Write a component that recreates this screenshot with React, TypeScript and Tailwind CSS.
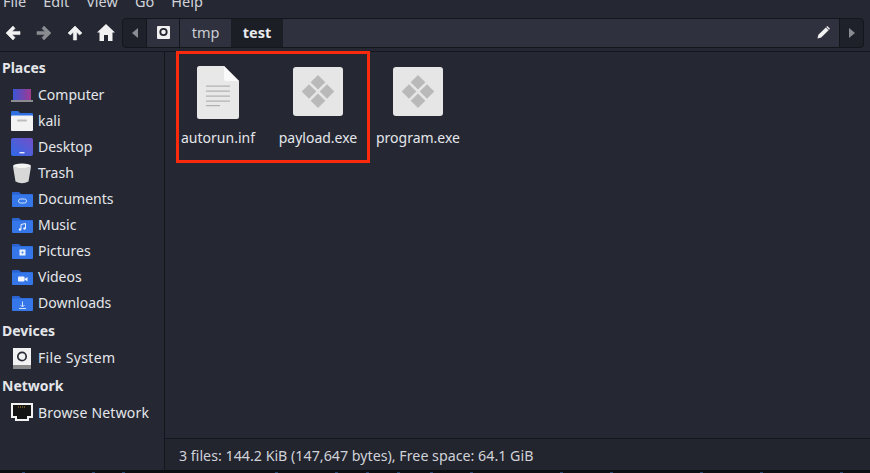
import React from "react";

const Folder = ({ children }: { children?: React.ReactNode }) => (
  <svg width="21" height="15" viewBox="0 0 21 15">
    <path d="M0 1a1 1 0 0 1 1-1h6l2 2h11a1 1 0 0 1 1 1v3H0z" fill="#2a63cf" />
    <rect x="0" y="2.500" width="21" height="12.500" rx="1" fill="#3577e8" />
    {children}
  </svg>
);

const Arrow = ({ rot = 0, color = "#f2f2f2" }: { rot?: number; color?: string }) => (
  <svg width="16" height="16" viewBox="0 0 16 16" style={{ transform: `rotate(${rot}deg)` }}>
    <path d="M8 1 L15 8 L12.600 10 L9.600 7 V15 H6.400 V7 L3.400 10 L1 8 Z" fill={color} strokeLinejoin="round" stroke={color} strokeWidth="0.600" />
  </svg>
);

const items: [string, React.ReactNode][] = [
  ["Computer", (
    <svg width="22" height="20" viewBox="0 0 22 20"><defs><linearGradient id="cg" x1="0" x2="1"><stop offset="0" stopColor="#3a55d8" /><stop offset="1" stopColor="#a03a90" /></linearGradient></defs><rect x="2" y="4" width="18" height="11" fill="url(#cg)" /><rect x="0" y="15.500" width="22" height="1" fill="#f0f0f0" /></svg>
  )],
  ["kali", (
    <svg width="22" height="20" viewBox="0 0 22 20"><path d="M0 1a1 1 0 0 1 1-1h6l2 2h12a1 1 0 0 1 1 1v4H0z" fill="#2f6fe0" /><rect x="0" y="4.500" width="22" height="15.500" rx="1" fill="#f3f3f3" /><rect x="6" y="8.500" width="10" height="2" rx="1" fill="#bdbdbd" /></svg>
  )],
  ["Desktop", (
    <svg width="22" height="18" viewBox="0 0 22 18"><defs><linearGradient id="dg" x1="0" x2="1" y1="1" y2="0"><stop offset="0" stopColor="#2f6ae8" /><stop offset="1" stopColor="#7250c8" /></linearGradient></defs><rect x="0" y="0" width="22" height="18" rx="2" fill="url(#dg)" /><rect x="8.500" y="14" width="5" height="1.400" fill="#e8e8ff" /></svg>
  )],
  ["Trash", (
    <svg width="20" height="21" viewBox="0 0 20 21"><ellipse cx="10" cy="3" rx="9" ry="2.500" fill="#f4f4f4" /><path d="M1 3.500 L3.500 18.500 Q10 22 16.500 18.500 L19 3.500 Q10 6.500 1 3.500Z" fill="#d8d8d8" /></svg>
  )],
  ["Documents", <Folder><rect x="6.500" y="7" width="8" height="4" rx="2" fill="none" stroke="#cfe0ff" strokeWidth="1" /></Folder>],
  ["Music", <Folder><path d="M9 11.500V6.500l4.500-1v5" fill="none" stroke="#eaf1ff" strokeWidth="1" /><circle cx="8" cy="11.500" r="1.200" fill="#eaf1ff" /><circle cx="12.500" cy="10.500" r="1.200" fill="#eaf1ff" /></Folder>],
  ["Pictures", <Folder><rect x="7.500" y="5.500" width="6" height="6" fill="#eaf1ff" /><circle cx="10.500" cy="8.500" r="1" fill="#3577e8" /></Folder>],
  ["Videos", <Folder><rect x="6" y="6.500" width="6.500" height="5" rx=".8" fill="#f3f6ff" /><path d="M12.500 9l3-2v4.500l-3-2z" fill="#f3f6ff" /></Folder>],
  ["Downloads", <Folder><path d="M10.500 5.500v5M8.500 9l2 2 2-2M7 12.500h7" fill="none" stroke="#cfe0ff" strokeWidth="1" /></Folder>],
];

const Row = ({ icon, label, labelClass = "" }: { icon: React.ReactNode; label: string; labelClass?: string }) => (
  <div className="flex items-center h-[26px] pl-[11px]">
    <span className="w-[22px] h-[22px] flex items-center justify-center shrink-0">{icon}</span>
    <span className={`ml-[5px] pb-[2px] text-[14px] text-[#e4e6ea] ${labelClass}`}>{label}</span>
  </div>
);

const Heading = ({ children }: { children: React.ReactNode }) => (
  <div className="pl-[2px] h-[27px] pb-[2px] flex items-center text-[14px] font-bold text-[#e4e6ea]">{children}</div>
);

const Exe = () => (
  <svg width="50" height="49" viewBox="0 0 50 49">
    <rect x="0" y="0" width="50" height="49" rx="3" fill="#e6e6e6" />
    <g fill="#b9b9b9">
      <path d="M25 8l7.300 7.300-7.300 7.300-7.300-7.300z" />
      <path d="M25 26.400l7.300 7.300-7.300 7.300-7.300-7.300z" />
      <path d="M16 17.200l7.300 7.300-7.300 7.300-7.300-7.300z" />
      <path d="M34 17.200l7.300 7.300-7.300 7.300-7.300-7.300z" />
    </g>
  </svg>
);

const Doc = () => (
  <svg width="42" height="53" viewBox="0 0 42 53">
    <path d="M2.500 0H27L42 15V50.500A2.500 2.500 0 0 1 39.500 53H2.500A2.500 2.500 0 0 1 0 50.500V2.500A2.500 2.500 0 0 1 2.500 0Z" fill="#e8e8e8" />
    <path d="M27 0L42 15H29a2 2 0 0 1-2-2Z" fill="#fafafa" />
    <g fill="#b0b0b0">
      <rect x="9" y="19.500" width="24" height="1.200" />
      <rect x="9" y="24.500" width="24" height="1.200" />
      <rect x="9" y="29.500" width="24" height="1.200" />
      <rect x="9" y="34.500" width="24" height="1.200" />
      <rect x="9" y="39" width="14" height="1.200" />
    </g>
  </svg>
);

const FileItem = ({ name, icon }: { name: string; icon: React.ReactNode }) => (
  <div className="flex flex-col items-center w-[100px]">
    <div className="h-[53px] flex items-start justify-center">{icon}</div>
    <div className="mt-[9px] text-[14px] leading-[20px] text-[#e4e6ea] whitespace-nowrap">{name}</div>
  </div>
);

const flecks = [22, 92, 122, 275, 335, 366, 397, 430, 470, 560, 610, 700, 760, 840];

export default function App() {
  return (
    <div className="w-[870px] h-[473px] overflow-hidden bg-[#252833] flex flex-col" style={{ fontFamily: '"Noto Sans", sans-serif' }}>
      <div className="h-[11px] overflow-visible flex items-end gap-[17px] pl-[3px] text-[14.5px] text-[#d0d2d8] leading-[20px]">
        <span>File</span><span>Edit</span><span>View</span><span>Go</span><span>Help</span>
      </div>
      <div className="h-[41px] shrink-0 flex items-center border-b border-[#14161c] pt-[3px]">
        <div className="flex items-center gap-[15px] pl-[5px] w-[122px]">
          <Arrow rot={-90} />
          <Arrow rot={90} color="#8a8c92" />
          <Arrow />
          <svg width="18" height="17" viewBox="0 0 18 17" className="ml-[-1px]"><path d="M9 0L18 8.500H15.500V17H11V11H7V17H2.500V8.500H0Z" fill="#f2f2f2" /></svg>
        </div>
        <div className="flex items-stretch h-[30px] w-[742px] rounded-[4px] border border-[#14161c] bg-[#1f212a]">
          <div className="w-[24px] flex items-center justify-center border-r border-[#14161c]">
            <span className="border-y-[5px] border-y-transparent border-r-[6px] border-r-[#8a8c92]" />
          </div>
          <div className="w-[33px] bg-[#2f323e] flex items-center justify-center border-r border-[#14161c]">
            <svg width="13" height="13" viewBox="0 0 13 13"><rect width="13" height="13" rx="1" fill="#f0f0f0" /><circle cx="6.500" cy="6" r="3.200" fill="none" stroke="#22242d" strokeWidth="1.800" /></svg>
          </div>
          <div className="w-[51px] bg-[#2f323e] flex items-center justify-center text-[14.5px] text-[#c9ccd3]">tmp</div>
          <div className="w-[52px] bg-[#1c1e26] flex items-center justify-center text-[14.5px] font-bold text-[#e8eaee]">test</div>
          <div className="flex-1 bg-[#2f323e] flex items-center justify-end pr-[9px] border-r border-[#14161c]">
            <svg width="13" height="13" viewBox="0 0 14 14"><path d="M0.500 13.500L1.500 9.500L9.500 1.500L12.500 4.500L4.500 12.500Z" fill="#f2f2f2" /><path d="M10.500 0.500L13.500 3.500" stroke="#f2f2f2" strokeWidth="1.500" /></svg>
          </div>
          <div className="w-[23px] flex items-center justify-center">
            <span className="border-y-[5px] border-y-transparent border-l-[6px] border-l-[#8a8c92]" />
          </div>
        </div>
      </div>
      <div className="flex flex-1 min-h-0">
        <div className="w-[165px] shrink-0 border-r border-[#14161c] pt-[3px]">
          <Heading>Places</Heading>
          {items.map(([l, i]) => <Row key={l} label={l} icon={i} />)}
          <div className="h-[2px]" />
          <Heading>Devices</Heading>
          <Row label="File System" labelClass="tracking-[0.35px]" icon={
            <svg width="18" height="21" viewBox="0 0 18 21"><rect x="0" y="0" width="18" height="17" fill="#f2f2f2" /><rect x="0" y="17" width="18" height="4" fill="#8a8a8a" /><circle cx="9" cy="8.500" r="4.200" fill="none" stroke="#2a2c35" strokeWidth="1.700" /></svg>
          } />
          <div className="h-[2px]" />
          <Heading>Network</Heading>
          <Row label="Browse Network" labelClass="tracking-[0.2px]" icon={
            <svg width="22" height="20" viewBox="0 0 22 20"><path d="M1 1h20v13h-4v3H5v-3H1z" fill="#141414" stroke="#f2f2f2" strokeWidth="2" /><path d="M7 4h8" stroke="#b08a30" strokeWidth="1" strokeDasharray="1 1" /></svg>
          } />
        </div>
        <div className="flex-1 flex flex-col min-w-0">
          <div className="flex-1 relative pl-[3px] pt-[14px] flex items-start">
            <div className="absolute left-[11px] top-[-1px] w-[194px] h-[112px] border-[3px] border-[#fb2a0c]" />
            <FileItem name="autorun.inf" icon={<Doc />} />
            <FileItem name="payload.exe" icon={<div className="pt-[1px]"><Exe /></div>} />
            <FileItem name="program.exe" icon={<div className="pt-[1px]"><Exe /></div>} />
          </div>
          <div className="h-[32px] shrink-0 bg-[#22242e] border-t border-[#14161c] flex items-center pl-[14px] pt-[2px] text-[14.25px] text-[#d0d2d8]">
            3 files: 144.2 KiB (147,647 bytes), Free space: 64.1 GiB
          </div>
        </div>
      </div>
      <div className="h-[3px] shrink-0 bg-[#0d0e12] flex">
        <svg width="870" height="3" viewBox="0 0 870 3">
          {flecks.map((x) => <rect key={x} x={x} y="2" width="3" height="1" fill="#23456f" />)}
        </svg>
      </div>
    </div>
  );
}
